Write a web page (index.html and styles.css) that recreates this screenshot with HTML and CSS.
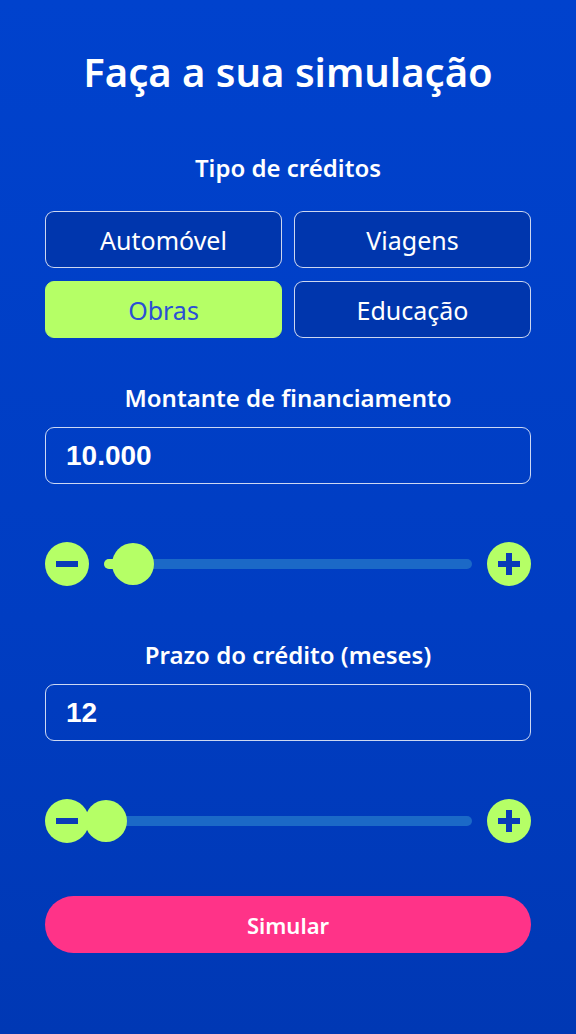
FILE: index.html
```html
<!DOCTYPE html>
<html lang="pt">
<head>
    <meta charset="UTF-8">
    <meta name="viewport" content="width=device-width, initial-scale=1.0">
    <title>Simulação de crédito</title>
    <link rel="stylesheet" href="styles.css">
</head>
<body>
    <div class="container">
        <h1>Faça a sua simulação</h1>

        <h2 class="first">Tipo de créditos</h2>
        <div class="types">
            <button class="type-button">Automóvel</button>
            <button class="type-button">Viagens</button>
            <button class="type-button selected">Obras</button>
            <button class="type-button">Educação</button>
        </div>

        <h2>Montante de financiamento</h2>
        <div class="value-box">10.000</div>
        <div class="slider-row">
            <button class="round-button minus"><span class="bar"></span></button>
            <div class="track">
                <div class="fill" style="width: 8%;"></div>
                <div class="thumb" style="left: 8%;"></div>
            </div>
            <button class="round-button plus"><span class="bar"></span><span class="bar vertical"></span></button>
        </div>

        <h2 class="second">Prazo do crédito (meses)</h2>
        <div class="value-box">12</div>
        <div class="slider-row">
            <button class="round-button minus"><span class="bar"></span></button>
            <div class="track">
                <div class="fill" style="width: 0.5%;"></div>
                <div class="thumb" style="left: 0.5%;"></div>
            </div>
            <button class="round-button plus"><span class="bar"></span><span class="bar vertical"></span></button>
        </div>

        <button class="simulate-button">Simular</button>
    </div>
</body>
</html>
```

FILE: styles.css
```css
body {
    margin: 0;
    min-height: 1034px;
    font-family: "Noto Sans", "Open Sans", sans-serif;
    color: white;
    background: linear-gradient(180deg, #0042cd 0%, #003dc2 60%, #0038b4 100%);
}
.container {
    padding: 43px 45px 0 45px;
}
h1 {
    margin: 0;
    text-align: center;
    font-size: 40px;
    font-weight: 600;
    line-height: 58px;
}
h2 {
    margin: 45px 0 14px 0;
    text-align: center;
    font-size: 24px;
    font-weight: 600;
    line-height: 30px;
}
h2.first {
    margin-top: 52px;
    margin-bottom: 28px;
}
h2.second {
    margin-top: 54px;
}
.types {
    display: grid;
    grid-template-columns: 1fr 1fr;
    column-gap: 12px;
    row-gap: 13px;
}
.type-button {
    height: 57px;
    background: #0036ad;
    border: 1.5px solid rgba(255,255,255,0.8);
    border-radius: 9px;
    color: white;
    font-family: inherit;
    font-size: 25px;
    cursor: pointer;
}
.type-button.selected {
    background: #b5ff66;
    border-color: #b5ff66;
    color: #2a4fd6;
}
.value-box {
    height: 57px;
    box-sizing: border-box;
    padding: 0 20px;
    display: flex;
    align-items: center;
    border: 1.5px solid rgba(255,255,255,0.8);
    border-radius: 9px;
    font-family: "Liberation Sans", Arial, sans-serif;
    font-size: 28px;
    font-weight: 700;
}
.slider-row {
    display: flex;
    align-items: center;
    margin-top: 58px;
    gap: 15px;
}
.round-button {
    position: relative;
    width: 44px;
    height: 44px;
    flex: none;
    padding: 0;
    border: none;
    border-radius: 50%;
    background: #b5ff66;
    cursor: pointer;
}
.bar {
    position: absolute;
    left: 11px;
    top: 19px;
    width: 22px;
    height: 6px;
    background: #0a3bb8;
}
.bar.vertical {
    left: 19px;
    top: 11px;
    width: 6px;
    height: 22px;
}
.track {
    position: relative;
    flex: 1;
    height: 10px;
    border-radius: 5px;
    background: #1b69c7;
}
.fill {
    height: 10px;
    border-radius: 5px;
    background: #b5ff66;
}
.thumb {
    position: absolute;
    top: -16px;
    width: 42px;
    height: 42px;
    margin-left: -21px;
    border-radius: 50%;
    background: #b5ff66;
}
.simulate-button {
    display: block;
    width: 100%;
    height: 57px;
    margin-top: 53px;
    border: none;
    border-radius: 29px;
    background: #ff3388;
    color: white;
    font-family: inherit;
    font-size: 22px;
    font-weight: 600;
    cursor: pointer;
}
```
